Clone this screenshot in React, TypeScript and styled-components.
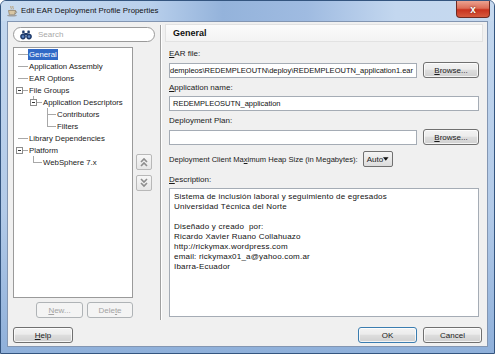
import React from "react";
import styled, { createGlobalStyle, css } from "styled-components";

const GlobalStyle = createGlobalStyle`
  html, body { margin: 0; padding: 0; background: #ffffff; }
  body { font-family: "Liberation Sans", Arial, sans-serif; }
  * { box-sizing: border-box; }
`;

const Window = styled.div`
  width: 495px;
  height: 354px;
  display: flex;
  flex-direction: column;
  border: 1px solid #34557f;
  border-radius: 6px 6px 0 0;
  overflow: hidden;
  background: linear-gradient(180deg, #c4d8ef 0%, #b2cae8 60%, #8fb0da 100%);
`;

const TitleBar = styled.div`
  height: 20px;
  display: flex;
  align-items: flex-start;
  background: linear-gradient(90deg, #c8dbf0 0%, #b9d0ec 30%, #94b3db 45%, #9fbbe1 62%, #c3d7ef 80%, #c6d9ef 100%);
`;

const TitleIcon = styled.svg`
  margin: 4px 0 0 5px;
  flex: none;
`;

const TitleText = styled.span`
  margin-left: 3px;
  line-height: 20px;
  font-size: 7.8px;
  color: #111;
`;

const CloseButton = styled.div`
  margin-left: auto;
  margin-right: 4px;
  width: 34px;
  height: 17px;
  display: flex;
  align-items: center;
  justify-content: center;
  border: 1px solid #6e2a22;
  border-top: none;
  border-radius: 0 0 4px 4px;
  background: linear-gradient(180deg, #eba290 0%, #dc6e58 45%, #c8331e 55%, #d65a3f 100%);
  color: #fff;
  font-size: 10px;
  font-weight: bold;
  text-shadow: 0 0 2px #5a1a10;
`;

const Client = styled.div`
  flex: 1;
  margin: 0 6px 6px 6px;
  border: 1px solid #8396b2;
  background: #f0f0f0;
  display: flex;
  flex-direction: column;
  padding: 2px 5px 3px 5px;
  gap: 5px;
`;

const Main = styled.div`
  flex: 1;
  display: flex;
`;

const LeftCol = styled.div`
  width: 142px;
  flex: none;
  display: flex;
  flex-direction: column;
  padding-top: 3px;
`;

const SearchBox = styled.div`
  height: 15px;
  border: 1px solid #9a9a9a;
  border-radius: 8px;
  background: #fff;
  display: flex;
  align-items: center;
  padding-left: 6px;
  gap: 6px;
  margin-bottom: 5px;
  font-size: 8px;
  color: #a8a8a8;
`;

const TreeRow = styled.div`
  display: flex;
  gap: 3px;
`;

const TreeBox = styled.div`
  width: 120px;
  height: 251px;
  border: 1px solid #9a9a9a;
  background: #fff;
`;

const MoveCol = styled.div`
  width: 16px;
  display: flex;
  flex-direction: column;
  justify-content: center;
  gap: 5px;
`;

const MoveButton = styled.div`
  width: 16px;
  height: 16px;
  border: 1px solid #b8b8b8;
  border-radius: 2px;
  background: linear-gradient(180deg, #f7f7f7, #e6e6e6);
  display: flex;
  align-items: center;
  justify-content: center;
`;

const ListButtons = styled.div`
  width: 120px;
  display: flex;
  justify-content: flex-end;
  gap: 4px;
  margin-top: 4px;
`;

const Button = styled.button<{ $width: number; $default?: boolean }>`
  flex: none;
  width: ${(p) => p.$width}px;
  height: 16px;
  padding: 0;
  font: 8px "Liberation Sans", Arial, sans-serif;
  color: #1a1a1a;
  border: 1px solid ${(p) => (p.$default ? "#3b7db0" : "#707070")};
  border-radius: 3px;
  background: linear-gradient(180deg, #f3f3f3 0%, #ececec 45%, #dedede 50%, #d0d0d0 100%);
  box-shadow: inset 0 0 0 1px rgba(255, 255, 255, 0.75);
  &:disabled {
    color: #a3a3a3;
    border-color: #afb3b6;
    background: #f4f4f4;
    box-shadow: none;
  }
`;

const Separator = styled.div`
  width: 2px;
  margin: 1px 3px 2px 5px;
  border-left: 1px solid #a0a0a0;
  border-right: 1px solid #ffffff;
`;

const RightCol = styled.div`
  flex: 1;
  min-width: 0;
  display: flex;
  flex-direction: column;
  padding: 0 3px 5px 0;
`;

const Header = styled.div`
  height: 18px;
  margin-right: -4px;
  display: flex;
  align-items: center;
  padding-left: 7px;
  font-size: 9px;
  font-weight: bold;
  color: #111;
  background: linear-gradient(180deg, #fbfbfb, #f3f3f3);
  border: 1px solid #e2e2e2;
`;

const Label = styled.div<{ $top: number }>`
  margin: ${(p) => p.$top}px 0 3px 4px;
  line-height: 11px;
  font-size: 8px;
  color: #1a1a1a;
`;

const U = styled.span`
  text-decoration: underline;
`;

const FieldRow = styled.div`
  display: flex;
  align-items: center;
  gap: 6px;
  padding-left: 4px;
`;

const TextField = styled.div<{ $tail?: boolean }>`
  flex: 1;
  min-width: 0;
  height: 15px;
  border: 1px solid #a5acb5;
  background: #fff;
  display: flex;
  align-items: center;
  overflow: hidden;
  white-space: nowrap;
  font-size: 7.5px;
  color: #111;
  padding: 0 3px;
  ${(p) =>
    p.$tail &&
    css`
      justify-content: flex-end;
    `}
`;

const HeapRow = styled.div`
  display: flex;
  align-items: center;
  gap: 5px;
  margin-top: 6px;
  padding-left: 4px;
  font-size: 7.6px;
  color: #1a1a1a;
`;

const Select = styled.div`
  width: 30px;
  height: 16px;
  border: 1px solid #707070;
  border-radius: 2px;
  background: linear-gradient(180deg, #f5f5f5, #dcdcdc);
  display: flex;
  align-items: center;
  justify-content: space-between;
  padding: 0 3px;
  font-size: 8px;
`;

const Description = styled.textarea`
  flex: 1;
  margin-left: 4px;
  resize: none;
  overflow: hidden;
  border: 1px solid #a5acb5;
  background: #fff;
  padding: 3px 4px;
  font: 8px/10px "Liberation Sans", Arial, sans-serif;
  letter-spacing: 0.2px;
  color: #111;
  outline: none;
`;

const BottomRow = styled.div`
  display: flex;
  gap: 6px;
  & > :first-child {
    margin-right: auto;
  }
`;

type Guide = "none" | "pipe" | "tee" | "elbow" | "dash";

const Cell = styled.span<{ $kind: Guide }>`
  position: relative;
  flex: none;
  width: 14px;
  height: 12px;
  display: flex;
  align-items: center;
  padding-left: 2px;
  &::before {
    content: "";
    position: absolute;
    left: 5px;
    width: 1px;
    top: 0;
    background: #a8a8a8;
    height: ${(p) => (p.$kind === "pipe" || p.$kind === "tee" ? "12px" : p.$kind === "elbow" ? "6px" : "0")};
  }
  &::after {
    content: "";
    position: absolute;
    top: 6px;
    left: ${(p) => (p.$kind === "dash" ? "4px" : "5px")};
    right: 0;
    height: ${(p) => (p.$kind === "tee" || p.$kind === "elbow" || p.$kind === "dash" ? "1px" : "0")};
    background: #a8a8a8;
  }
`;

const Expander = styled.span`
  position: relative;
  z-index: 1;
  width: 7px;
  height: 7px;
  border: 1px solid #8c8c8c;
  background: #fff;
  display: flex;
  align-items: center;
  justify-content: center;
  &::before {
    content: "";
    width: 3px;
    height: 1px;
    background: #333;
  }
`;

const NodeRow = styled.div`
  display: flex;
  align-items: center;
  height: 12px;
`;

const NodeLabel = styled.span<{ $selected?: boolean }>`
  padding: 0 1px;
  line-height: 11px;
  font-size: 7.8px;
  white-space: nowrap;
  color: ${(p) => (p.$selected ? "#fff" : "#1a1a1a")};
  background: ${(p) => (p.$selected ? "#3169c6" : "transparent")};
`;

type Node = { label: string; guides: Guide[]; open?: boolean; selected?: boolean };

const nodes: Node[] = [
  { label: "General", guides: ["dash"], selected: true },
  { label: "Application Assembly", guides: ["dash"] },
  { label: "EAR Options", guides: ["dash"] },
  { label: "File Groups", guides: ["dash"], open: true },
  { label: "Application Descriptors", guides: ["none", "elbow"], open: true },
  { label: "Contributors", guides: ["none", "none", "tee"] },
  { label: "Filters", guides: ["none", "none", "elbow"] },
  { label: "Library Dependencies", guides: ["dash"] },
  { label: "Platform", guides: ["dash"], open: true },
  { label: "WebSphere 7.x", guides: ["none", "elbow"] },
];

const descriptionText = [
  "Sistema de inclusión laboral y seguimiento de egresados",
  "Universidad Técnica del Norte",
  "",
  "Diseñado y creado  por:",
  "Ricardo Xavier Ruano Collahuazo",
  "http://rickymax.wordpress.com",
  "email: rickymax01_a@yahoo.com.ar",
  "Ibarra-Ecuador",
].join("\n");

function CupIcon() {
  return (
    <TitleIcon width="12" height="12" viewBox="0 0 12 12">
      <path d="M5 1 C4 2.5 6 3 5 4.5" stroke="#b08a50" strokeWidth="0.8" fill="none" />
      <path d="M7 1 C6 2.5 8 3 7 4.5" stroke="#b08a50" strokeWidth="0.8" fill="none" />
      <path d="M2.5 5.5 H9.5 L8.8 9 Q8.5 10 7.5 10 H4.5 Q3.5 10 3.2 9 Z" fill="#d8c6a4" stroke="#7d6a4c" strokeWidth="0.6" />
      <path d="M9.3 6.3 Q11 6.3 10.6 7.6 Q10.2 8.6 8.9 8.4" fill="none" stroke="#7d6a4c" strokeWidth="0.6" />
      <ellipse cx="6" cy="10.6" rx="4.8" ry="1" fill="#9e9e9e" />
    </TitleIcon>
  );
}

function Binoculars() {
  return (
    <svg width="12" height="10" viewBox="0 0 12 10">
      <rect x="2.2" y="0.5" width="2.4" height="3" rx="0.6" fill="#1d3a6b" />
      <rect x="7.4" y="0.5" width="2.4" height="3" rx="0.6" fill="#1d3a6b" />
      <rect x="4.2" y="3" width="3.6" height="2" fill="#1d3a6b" />
      <circle cx="3" cy="6.6" r="2.8" fill="#1d3a6b" />
      <circle cx="9" cy="6.6" r="2.8" fill="#1d3a6b" />
      <circle cx="3" cy="6.6" r="1.3" fill="#5d86c4" />
      <circle cx="9" cy="6.6" r="1.3" fill="#5d86c4" />
    </svg>
  );
}

function DoubleChevron({ up }: { up?: boolean }) {
  const d = up ? "M2 5 L5 2 L8 5 M2 9 L5 6 L8 9" : "M2 1 L5 4 L8 1 M2 5 L5 8 L8 5";
  return (
    <svg width="10" height="10" viewBox="0 0 10 10">
      <path d={d} fill="none" stroke="#8d8d8d" strokeWidth="1.6" />
    </svg>
  );
}

export default function App() {
  return (
    <>
      <GlobalStyle />
      <Window>
        <TitleBar>
          <CupIcon />
          <TitleText>Edit EAR Deployment Profile Properties</TitleText>
          <CloseButton>x</CloseButton>
        </TitleBar>
        <Client>
          <Main>
            <LeftCol>
              <SearchBox>
                <Binoculars />
                <span>Search</span>
              </SearchBox>
              <TreeRow>
                <TreeBox>
                  {nodes.map((n) => (
                    <NodeRow key={n.label}>
                      {n.guides.map((g, i) => (
                        <Cell key={i} $kind={g}>
                          {n.open && i === n.guides.length - 1 && <Expander />}
                        </Cell>
                      ))}
                      <NodeLabel $selected={n.selected}>{n.label}</NodeLabel>
                    </NodeRow>
                  ))}
                </TreeBox>
                <MoveCol>
                  <MoveButton>
                    <DoubleChevron up />
                  </MoveButton>
                  <MoveButton>
                    <DoubleChevron />
                  </MoveButton>
                </MoveCol>
              </TreeRow>
              <ListButtons>
                <Button $width={47} disabled>
                  <U>N</U>ew...
                </Button>
                <Button $width={46} disabled>
                  Dele<U>t</U>e
                </Button>
              </ListButtons>
            </LeftCol>
            <Separator />
            <RightCol>
              <Header>General</Header>
              <Label $top={6}>
                <U>E</U>AR file:
              </Label>
              <FieldRow>
                <TextField $tail>
                  <span>C:\JDeveloper\mywork\redempleos\REDEMPLEOUTN\deploy\REDEMPLEOUTN_application1.ear</span>
                </TextField>
                <Button $width={56}>
                  <U>B</U>rowse...
                </Button>
              </FieldRow>
              <Label $top={4}>
                <U>A</U>pplication name:
              </Label>
              <FieldRow>
                <TextField>REDEMPLEOSUTN_application</TextField>
              </FieldRow>
              <Label $top={4}>Deployment Plan:</Label>
              <FieldRow>
                <TextField />
                <Button $width={56}>
                  <U>B</U>rowse...
                </Button>
              </FieldRow>
              <HeapRow>
                <span>
                  Deployment Client Ma<U>x</U>imum Heap Size (in Megabytes):
                </span>
                <Select>
                  <span>Auto</span>
                  <svg width="6" height="4" viewBox="0 0 6 4">
                    <path d="M0 0 H6 L3 4 Z" fill="#111" />
                  </svg>
                </Select>
              </HeapRow>
              <Label $top={7}>
                <U>D</U>escription:
              </Label>
              <Description readOnly value={descriptionText} />
            </RightCol>
          </Main>
          <BottomRow>
            <Button $width={60}>
              <U>H</U>elp
            </Button>
            <Button $width={59} $default>
              OK
            </Button>
            <Button $width={59}>Cancel</Button>
          </BottomRow>
        </Client>
      </Window>
    </>
  );
}
